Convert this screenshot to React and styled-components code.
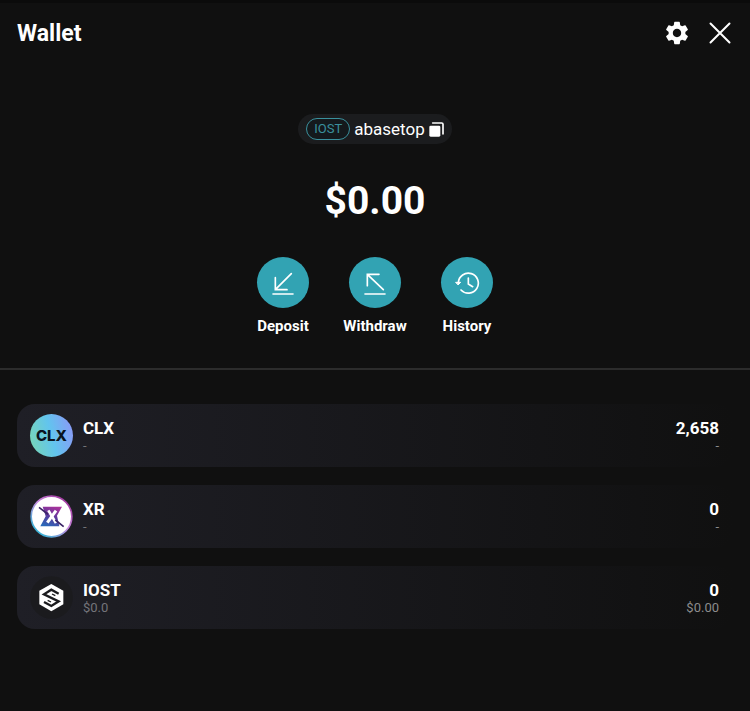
import React from 'react';
import styled, {createGlobalStyle} from 'styled-components';
import {MdSettings} from 'react-icons/md';

const tokens = [
  {symbol: 'CLX', price: '-', amount: '2,658', value: '-', Logo: ClxLogo},
  {symbol: 'XR', price: '-', amount: '0', value: '-', Logo: XrLogo},
  {symbol: 'IOST', price: '$0.0', amount: '0', value: '$0.00', Logo: IostLogo},
];

const actions = [
  {label: 'Deposit', Icon: DepositIcon},
  {label: 'Withdraw', Icon: WithdrawIcon},
  {label: 'History', Icon: HistoryIcon},
];

function App() {
  return (
    <Page>
      <GlobalStyle />
      <Header>
        <Title>Wallet</Title>
        <Tools>
          <IconButton type="button" aria-label="Settings">
            <MdSettings size={28} />
          </IconButton>
          <IconButton type="button" aria-label="Close">
            <CloseIcon />
          </IconButton>
        </Tools>
      </Header>

      <Summary>
        <Account>
          <Network>IOST</Network>
          <AccountName>abasetop</AccountName>
          <IconButton type="button" aria-label="Copy account">
            <CopyIcon />
          </IconButton>
        </Account>
        <Balance>$0.00</Balance>
        <Actions>
          {actions.map(({label, Icon}) => (
            <Action type="button" key={label}>
              <Circle>
                <Icon />
              </Circle>
              {label}
            </Action>
          ))}
        </Actions>
      </Summary>

      <TokenList>
        {tokens.map(({symbol, price, amount, value, Logo}) => (
          <Token key={symbol}>
            <Logo />
            <Info>
              <Strong>{symbol}</Strong>
              <Small>{price}</Small>
            </Info>
            <Info $end>
              <Strong>{amount}</Strong>
              <Small $light>{value}</Small>
            </Info>
          </Token>
        ))}
      </TokenList>
    </Page>
  );
}

function CloseIcon() {
  return (
    <svg width="22" height="22" viewBox="0 0 22 22" fill="none" stroke="currentColor" strokeWidth="2" strokeLinecap="round">
      <path d="M1.5 1.5L20.5 20.5M20.5 1.5L1.5 20.5" />
    </svg>
  );
}

function CopyIcon() {
  return (
    <svg width="15" height="15" viewBox="0 0 45 45">
      <rect x="1" y="11" width="33" height="33" rx="4" fill="currentColor" />
      <path d="M11 3H38Q42 3 42 7V36" fill="none" stroke="currentColor" strokeWidth="5" strokeLinecap="round" />
    </svg>
  );
}

function DepositIcon() {
  return (
    <ActionSvg viewBox="0 0 78 78">
      <path d="M64 11L16 59M16 23V59H51M9 72H69" />
    </ActionSvg>
  );
}

function WithdrawIcon() {
  return (
    <ActionSvg viewBox="0 0 78 78">
      <path d="M64 59L16 13M16 47V13H51M9 72H69" />
    </ActionSvg>
  );
}

function HistoryIcon() {
  return (
    <ActionSvg viewBox="0 0 78 78">
      <path d="M13 38A30 30 0 1 1 21 60M43 24V42L56 50" strokeWidth="5" />
      <path d="M6 37H20L13 44Z" fill="currentColor" strokeWidth="3" />
    </ActionSvg>
  );
}

function ClxLogo() {
  return <ClxBadge aria-hidden="true">CLX</ClxBadge>;
}

function XrLogo() {
  return (
    <svg width="43" height="43" viewBox="0 0 129 129" aria-hidden="true">
      <defs>
        <linearGradient id="xr-ring" x1="0.85" y1="0.1" x2="0.15" y2="0.9">
          <stop offset="0" stopColor="#a33aa0" />
          <stop offset="0.45" stopColor="#c98be0" />
          <stop offset="1" stopColor="#35b4d6" />
        </linearGradient>
        <linearGradient id="xr-mark" x1="0.7" y1="0" x2="0.3" y2="1">
          <stop offset="0" stopColor="#a8329c" />
          <stop offset="0.5" stopColor="#5a3a9c" />
          <stop offset="1" stopColor="#2a68b8" />
        </linearGradient>
      </defs>
      <circle cx="64.5" cy="64.5" r="61" fill="#fff" stroke="url(#xr-ring)" strokeWidth="5" />
      <path d="M38 35H96L81 62L88 94H31L47 64Z" fill="url(#xr-mark)" />
      <path d="M78 47L52 83" stroke="#fff" strokeWidth="9" />
      <path d="M55 46L78 84" stroke="#fff" strokeWidth="8" />
      <path d="M27 37L54 58M76 75L101 95" stroke="#3a2466" strokeWidth="5" />
    </svg>
  );
}

function IostLogo() {
  return (
    <svg width="43" height="43" viewBox="0 0 129 129" aria-hidden="true">
      <circle cx="64.5" cy="64.5" r="64" fill="#1b1b1e" />
      <path d="M64 24L100 44V85L64 106L28 85V44Z" fill="#fff" />
      <path
        d="M86 53L64 41L42 55L86 76L64 90L42 78"
        fill="none"
        stroke="#1b1b1e"
        strokeWidth="7"
      />
      <path d="M66 54L76 59M53 73L63 78" stroke="#1b1b1e" strokeWidth="4" />
    </svg>
  );
}

const GlobalStyle = createGlobalStyle`
  * {
    box-sizing: border-box;
  }

  body {
    margin: 0;
    background: #101010;
    color: #fff;
    font-family: Roboto, sans-serif;
  }

  button {
    padding: 0;
    border: 0;
    background: none;
    color: inherit;
    font: inherit;
    cursor: pointer;
  }

  svg {
    display: block;
  }
`;

const Page = styled.main`
  min-height: 100vh;
  border-top: 3px solid #0b0b0b;
`;

const Header = styled.header`
  display: flex;
  align-items: center;
  justify-content: space-between;
  height: 60px;
  padding: 0 19px 0 17px;
`;

const Title = styled.h1`
  margin: 0;
  font-size: 23px;
  line-height: 27px;
  font-weight: 700;
`;

const Tools = styled.div`
  display: flex;
  align-items: center;
  gap: 18px;
`;

const IconButton = styled.button`
  display: flex;
`;

const Summary = styled.section`
  display: flex;
  flex-direction: column;
  align-items: center;
  padding: 51px 16px 32px;
  border-bottom: 2px solid #2c2c2c;
`;

const Account = styled.div`
  display: flex;
  align-items: center;
  gap: 4px;
  height: 30px;
  padding: 0 8px;
  border-radius: 15px;
  background: #1b1c1e;
`;

const Network = styled.span`
  padding: 0 7px;
  border: 1px solid #3a909c;
  border-radius: 11px;
  background: #14191c;
  color: #3a909c;
  font-size: 13px;
  line-height: 20px;
`;

const AccountName = styled.span`
  font-size: 17px;
  line-height: 20px;
`;

const Balance = styled.div`
  margin-top: 33px;
  font-size: 39px;
  line-height: 48px;
  font-weight: 700;
`;

const Actions = styled.div`
  display: grid;
  grid-template-columns: repeat(3, 92px);
  margin-top: 32px;
`;

const Action = styled.button`
  && {
    display: flex;
    flex-direction: column;
    align-items: center;
    gap: 8px;
    font-size: 15px;
    line-height: 20px;
    font-weight: 700;
  }
`;

const Circle = styled.span`
  display: grid;
  place-items: center;
  width: 52px;
  height: 51px;
  border-radius: 50%;
  background: #32a3b3;
`;

const ActionSvg = styled.svg`
  width: 26px;
  height: 26px;
  fill: none;
  stroke: currentColor;
  stroke-width: 5;
  stroke-linecap: round;
`;

const TokenList = styled.ul`
  display: flex;
  flex-direction: column;
  gap: 18px;
  margin: 0;
  padding: 34px 17px;
  list-style: none;
`;

const Token = styled.li`
  display: flex;
  align-items: center;
  gap: 10px;
  height: 63px;
  padding: 0 14px 0 13px;
  border-radius: 18px;
  background: linear-gradient(90deg, #1f1f26, #101010);
`;

const ClxBadge = styled.span`
  display: grid;
  place-items: center;
  width: 43px;
  height: 43px;
  border-radius: 50%;
  background: linear-gradient(75deg, #7ad8b0, #62c4ee 50%, #8f94f8);
  color: #0b1420;
  font-family: Inter, sans-serif;
  font-size: 15px;
  font-weight: 800;
`;

const Info = styled.div`
  display: flex;
  flex-direction: column;
  margin-left: ${(props) => (props.$end ? 'auto' : '0')};
  text-align: ${(props) => (props.$end ? 'right' : 'left')};
`;

const Strong = styled.span`
  font-size: 17px;
  line-height: 20px;
  font-weight: 700;
`;

const Small = styled.span`
  color: ${(props) => (props.$light ? '#8c8c8c' : '#74747a')};
  font-size: 13px;
  line-height: 15px;
`;

export default App;
